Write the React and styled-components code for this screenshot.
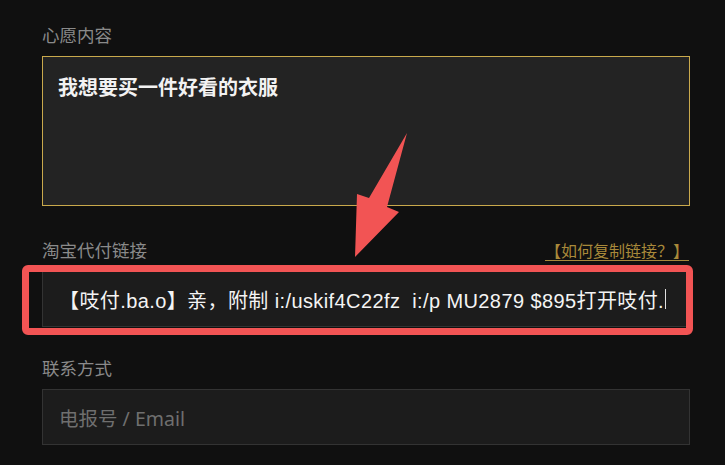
import styled, { createGlobalStyle } from 'styled-components'

const GlobalStyle = createGlobalStyle`
    html, body {
        margin: 0;
        padding: 0;
        background: #101010;
    }
    body {
        font-family: "Noto Sans", "Noto Sans CJK SC", sans-serif;
    }
`;

const App = () => {
    return (
        <Page>
            <GlobalStyle />
            <Form>
                <Field>
                    <LabelRow>
                        <Label>心愿内容</Label>
                    </LabelRow>
                    <WishBox>我想要买一件好看的衣服</WishBox>
                </Field>

                <Field gap={32}>
                    <LabelRow>
                        <Label>淘宝代付链接</Label>
                        <HelpLink href="#">【如何复制链接？】</HelpLink>
                    </LabelRow>
                    <Marked>
                        <Input>
                            <InputText>【吱付.ba.o】亲，附制 i:/uskif4C22fz&nbsp;&nbsp;i:/p MU2879 $895打开吱付.</InputText>
                            <Caret />
                        </Input>
                        <Highlight />
                    </Marked>
                </Field>

                <Field gap={29}>
                    <LabelRow>
                        <Label>联系方式</Label>
                    </LabelRow>
                    <Input>
                        <Placeholder>电报号 / Email</Placeholder>
                    </Input>
                </Field>
            </Form>

            <Arrow width="60" height="130" viewBox="0 0 60 130">
                <polygon points="57,3 37,77 49,82 5,127 7,64 19,68" fill="#f25454" />
            </Arrow>
        </Page>
    )
}

const Page = styled.div`
    position: relative;
    width: 725px;
    height: 465px;
    overflow: hidden;
    background: #101010;
`;

const Form = styled.div`
    display: flex;
    flex-direction: column;
    width: 648px;
    padding: 23px 0 0 42px;
`;

const Field = styled.div`
    display: flex;
    flex-direction: column;
    margin-top: ${props => props.gap || 0}px;
`;

const LabelRow = styled.div`
    display: flex;
    justify-content: space-between;
    align-items: flex-end;
    height: 24px;
    margin-bottom: 9px;
`;

const Label = styled.span`
    font-size: 17.5px;
    line-height: 24px;
    color: #8a8a8a;
`;

const HelpLink = styled.a`
    font-size: 16px;
    line-height: 22px;
    color: #a8893a;
    text-decoration: underline;
    text-underline-offset: 3px;
    margin-right: 1px;
`;

const WishBox = styled.div`
    height: 150px;
    box-sizing: border-box;
    border: 1px solid #c9a94c;
    background: #232323;
    padding: 17px 15px;
    color: #f2f2f2;
    font-size: 20px;
    font-weight: 700;
    line-height: 28px;
`;

const Marked = styled.div`
    position: relative;
`;

const Input = styled.div`
    display: flex;
    align-items: center;
    height: 56px;
    box-sizing: border-box;
    border: 1px solid #333;
    background: #1c1c1c;
    padding: 0 10px 0 16px;
    font-size: 20px;
`;

const InputText = styled.span`
    min-width: 0;
    overflow: hidden;
    white-space: nowrap;
    color: #f4f4f4;
    letter-spacing: 0.4px;
    font-family: "Liberation Sans", "Noto Sans CJK SC", sans-serif;
`;

const Caret = styled.span`
    flex: none;
    width: 1px;
    height: 20px;
    background: #e0e0e0;
    margin-left: 1px;
`;

const Placeholder = styled.span`
    color: #6f6f6f;
    font-size: 19.5px;
`;

const Highlight = styled.div`
    position: absolute;
    left: -20px;
    right: -3px;
    top: -6px;
    bottom: -8px;
    border: 7px solid #f25454;
    border-radius: 6px;
    pointer-events: none;
`;

const Arrow = styled.svg`
    position: absolute;
    left: 350px;
    top: 130px;
`;

export default App;
